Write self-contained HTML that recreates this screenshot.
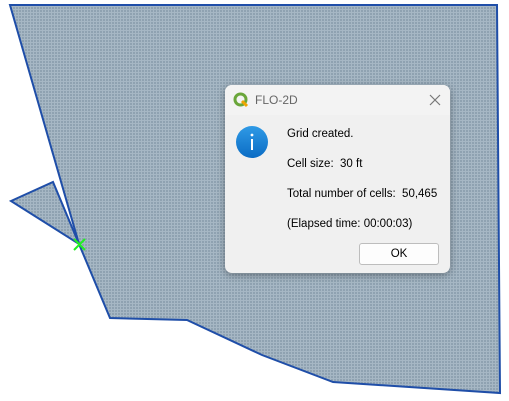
<!DOCTYPE html>
<html><head><style>
body{margin:0;width:509px;height:401px;background:#fff;position:relative;overflow:hidden;font-family:"Liberation Sans",sans-serif;}
.dlg{position:absolute;left:225px;top:85px;width:225px;height:188px;background:#f0f0f0;border-radius:7px;box-shadow:0 2px 8px rgba(0,0,0,.35);overflow:hidden;}
.tb{height:30px;background:#f3f3f3;position:relative;}
.tb .t{position:absolute;left:30px;top:8px;font-size:12px;color:#666;}
.txt{position:absolute;left:62px;font-size:11.5px;color:#000;}
.ok{position:absolute;left:134px;top:158px;width:78px;height:20px;border:1px solid #bdbdbd;border-radius:3px;background:#fdfdfd;font-size:11.5px;text-align:center;line-height:20px;}
</style></head><body>
<svg width="509" height="401" style="position:absolute;left:0;top:0">
<defs><pattern id="g" width="3" height="3" patternUnits="userSpaceOnUse"><rect width="3" height="3" fill="#8fa2b1"/><rect width="3" height="1" fill="#a6b7c4"/><rect width="1" height="3" fill="#a6b7c4"/></pattern></defs>
<polygon points="10,5 497,5 500,393 333,382 262,355 187,320 110,318 79,244" fill="url(#g)" stroke="#1f4ea8" stroke-width="2"/>
<polygon points="11,201 53,182 79,244" fill="url(#g)" stroke="#1f4ea8" stroke-width="2"/>
<path d="M74,239 L85,250 M85,239 L74,250" stroke="#22ee22" stroke-width="2"/>
</svg>
<div class="dlg">
<div class="tb">
<svg width="16" height="16" style="position:absolute;left:8px;top:7px"><circle cx="7.5" cy="7.5" r="5.5" fill="none" stroke="#6aa63a" stroke-width="3"/><path d="M9,9 L14,14" stroke="#f0a500" stroke-width="3"/></svg>
<span class="t">FLO-2D</span>
<svg width="12" height="12" style="position:absolute;left:204px;top:9px"><path d="M1,1 L11,11 M11,1 L1,11" stroke="#777" stroke-width="1.2"/></svg>
</div>
<svg width="34" height="34" style="position:absolute;left:10px;top:40px"><defs><linearGradient id="b" x1="0" y1="0" x2="0" y2="1"><stop offset="0" stop-color="#2f9ae6"/><stop offset="1" stop-color="#0b6cc4"/></linearGradient></defs><circle cx="17" cy="17" r="16" fill="url(#b)"/><rect x="16" y="14" width="2" height="11" fill="#fff"/><circle cx="17" cy="10" r="1.4" fill="#fff"/></svg>
<div class="txt" style="top:43px">Grid created.</div>
<div class="txt" style="top:73px">Cell size:&nbsp; 30 ft</div>
<div class="txt" style="top:103px">Total number of cells:&nbsp; 50,465</div>
<div class="txt" style="top:133px">(Elapsed time: 00:00:03)</div>
<div class="ok">OK</div>
</div>
</body></html>
